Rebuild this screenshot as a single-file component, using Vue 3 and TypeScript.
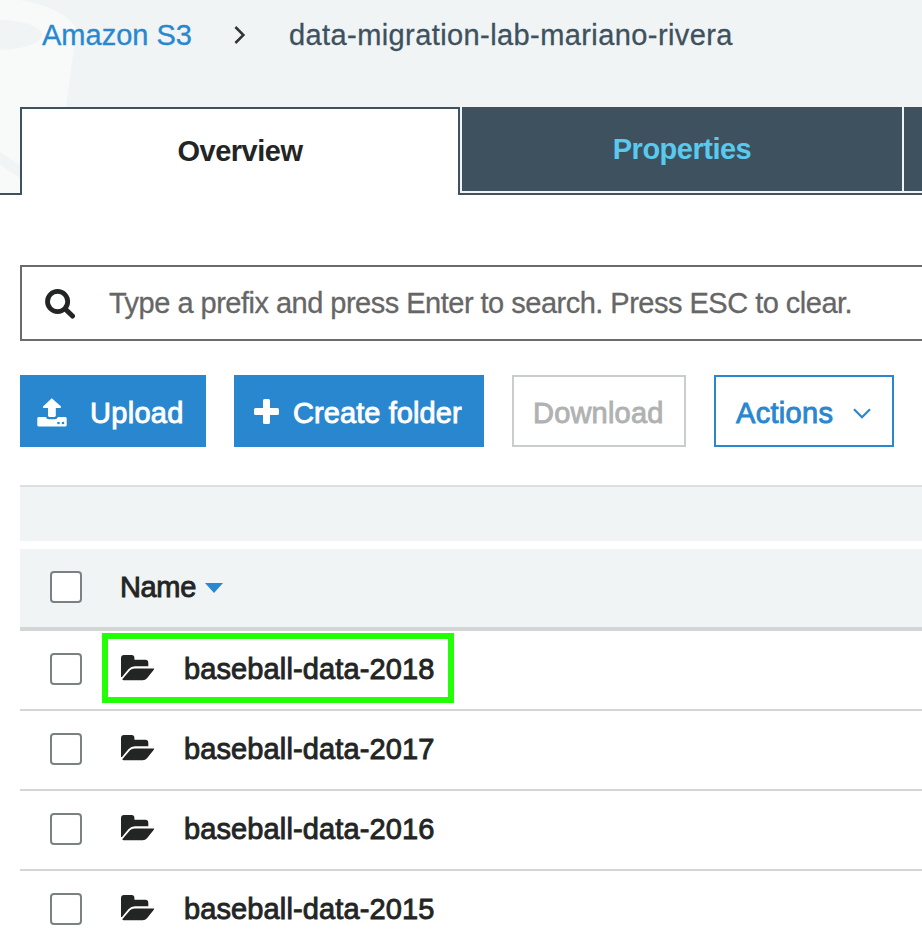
<script setup lang="ts">
interface FolderRow {
  name: string
  highlighted?: boolean
}

const searchHint = 'Type a prefix and press Enter to search. Press ESC to clear.'

const folders: FolderRow[] = [
  { name: 'baseball-data-2018', highlighted: true },
  { name: 'baseball-data-2017' },
  { name: 'baseball-data-2016' },
  { name: 'baseball-data-2015' },
]
</script>

<template>
  <div class="page">
    <header class="header">
      <svg class="bucket" viewBox="0 0 80 193" width="80" height="193" aria-hidden="true">
        <path d="M0 0H19C48 4 76 18 76 32L66 107L54 193H0Z" fill="#f8faf9" />
        <path d="M0 20C24 20 42 27 42 35S24 49 0 50Z" fill="#f0f4f5" />
        <path d="M0 152L20 165V178L0 165Z" fill="#f0f4f5" />
      </svg>
      <nav class="breadcrumb">
        <a class="crumb-link">Amazon S3</a>
        <svg class="crumb-arrow" viewBox="0 0 12 20" width="12" height="20">
          <path d="M1.4 2L9.4 10L1.4 18" fill="none" stroke="#333" stroke-width="2.5" />
        </svg>
        <span class="crumb-current">data-migration-lab-mariano-rivera</span>
      </nav>
      <div class="tabs">
        <div class="tab tab-active">Overview</div>
        <div class="tab tab-idle">Properties</div>
        <div class="tab tab-idle"></div>
      </div>
    </header>

    <main class="content">
      <div class="search">
        <svg class="search-icon" viewBox="0 0 30 30" width="30" height="30">
          <circle cx="12.6" cy="12.5" r="10.1" fill="none" stroke="#232525" stroke-width="4.8" />
          <path d="M20.5 20.2L27.5 27" stroke="#232525" stroke-width="5" stroke-linecap="round" />
        </svg>
        <span class="search-text">{{ searchHint }}</span>
      </div>

      <div class="toolbar">
        <button class="btn btn-primary btn-upload">
          <svg viewBox="0 0 30 29" width="30" height="29">
            <path
              d="M14.8.3L24 8.6Q24.4 10 23 10H18.8V17.6Q18.8 19 17.4 19H12.4Q11 19 11 17.6V10H6.8Q5.4 10 6 8.6Z"
              fill="#fff"
            />
            <path
              d="M1.6 19H9V19.3Q9.6 21.2 11.8 21.2H18Q20.2 21.2 20.8 19.3V19H28.3Q29.7 19 29.7 20.5V27Q29.7 28.5 28.2 28.5H1.8Q.3 28.5 .3 27V20.5Q.3 19 1.6 19Z"
              fill="#fff"
            />
            <circle cx="21.5" cy="25" r="1.3" fill="#2987cf" />
            <circle cx="26" cy="25" r="1.3" fill="#2987cf" />
          </svg>
          <span class="upload-label">Upload</span>
        </button>
        <button class="btn btn-primary btn-create">
          <svg viewBox="0 0 25 25" width="25" height="25">
            <rect x="9" y="0" width="7" height="25" rx="1.6" fill="#fff" />
            <rect x="0" y="9" width="25" height="7" rx="1.6" fill="#fff" />
          </svg>
          <span class="create-label">Create folder</span>
        </button>
        <button class="btn btn-disabled"><span class="download-label">Download</span></button>
        <button class="btn btn-outline">
          <span class="actions-label">Actions</span>
          <svg class="caret" viewBox="0 0 18 11" width="18" height="11">
            <path d="M1 1.2L9 9.2L17 1.2" fill="none" stroke="#2987cf" stroke-width="2.2" />
          </svg>
        </button>
      </div>

      <div class="table">
        <div class="table-strip"></div>
        <div class="table-head">
          <span class="checkbox"></span>
          <span class="head-name">Name</span>
          <svg class="sort" viewBox="0 0 18 10" width="18" height="10">
            <path d="M0 0H18L9 10Z" fill="#2987cf" />
          </svg>
        </div>
        <div v-for="folder in folders" :key="folder.name" class="row">
          <span v-if="folder.highlighted" class="highlight"></span>
          <span class="checkbox"></span>
          <svg class="folder" viewBox="0 0 34 26" width="34" height="26">
            <path
              d="M0 22V3Q0 0 3 0H10.6Q13.4 0 13.4 3V4.7H24.3Q27.3 4.7 27.3 7.7V11.3H14Q10.2 11.3 7.6 14L1 22Z"
              fill="#232525"
            />
            <path
              d="M1.5 24L9 15.3Q10.8 13.4 13.4 13.4H32.5Q33.7 13.5 33 14.6L26 23.2Q24.3 25.3 21.8 25.3H3Q.8 25.2 1.5 24Z"
              fill="#232525"
            />
          </svg>
          <span class="folder-name">{{ folder.name }}</span>
        </div>
      </div>
    </main>
  </div>
</template>

<style>
body {
  margin: 0;
  background: #fff;
}
</style>

<style scoped>
.page {
  box-sizing: border-box;
  height: 940px;
  overflow: hidden;
  background: #fff;
  color: #232525;
  font-family: 'Liberation Sans', Arial, Helvetica, sans-serif;
  font-size: 29px;
  line-height: 32px;
}

.header {
  position: relative;
  box-sizing: border-box;
  height: 195px;
  background: #f0f4f5;
  border-bottom: 2px solid #3d515e;
}

.bucket {
  position: absolute;
  left: 0;
  top: 0;
}

.breadcrumb {
  position: relative;
  display: flex;
  align-items: center;
  height: 70px;
  padding: 0 0 37px 42px;
  white-space: nowrap;
  -webkit-text-stroke: 0.3px currentColor;
}

.crumb-link {
  width: 192px;
  color: #2987cf;
}

.crumb-arrow {
  margin: -1px 43px 0 0;
}

.crumb-current {
  color: #3d515e;
  letter-spacing: 0.41px;
}

.tabs {
  position: relative;
  display: flex;
  gap: 2px;
  padding-left: 20px;
}

.tab {
  flex: none;
  box-sizing: border-box;
  width: 440px;
  text-align: center;
  font-weight: 700;
  letter-spacing: -0.5px;
}

.tab-active {
  height: 88px;
  margin-bottom: -2px;
  padding-top: 26px;
  background: #fff;
  border: 2px solid #3d515e;
  border-bottom: 0;
  border-radius: 0 0 2px 2px;
}

.tab-idle {
  height: 84px;
  padding-top: 26px;
  background: #3d515e;
  color: #5bc9ee;
}

.content {
  width: 1100px;
  padding: 70px 0 0 20px;
}

.search {
  box-sizing: border-box;
  display: flex;
  align-items: center;
  gap: 34px;
  height: 76px;
  padding-left: 23px;
  border: 2px solid #6a6b6b;
  color: #666;
}

.search-icon {
  margin-top: 2px;
}

.search-text {
  letter-spacing: -0.51px;
  white-space: nowrap;
  -webkit-text-stroke: 0.3px currentColor;
}

.toolbar {
  display: flex;
  gap: 28px;
  margin-top: 34px;
}

.btn {
  box-sizing: border-box;
  display: flex;
  align-items: center;
  height: 72px;
  margin: 0;
  padding: 0 0 0 19px;
  border: 2px solid #2987cf;
  border-radius: 0;
  background: #fff;
  color: #2987cf;
  font: inherit;
  letter-spacing: 0.3px;
  white-space: nowrap;
  -webkit-text-stroke: 0.9px currentColor;
}

.btn span {
  padding-top: 4px;
}

.btn svg {
  flex: none;
}

.btn-primary {
  background: #2987cf;
  color: #fff;
}

.btn-upload {
  width: 186px;
  padding-left: 15px;
  gap: 23px;
}

.btn-upload svg {
  margin-top: 2px;
}

.btn-create {
  width: 250px;
  padding-left: 18px;
  gap: 14px;
  letter-spacing: 0.08px;
}

.btn-disabled {
  width: 174px;
  border-color: #c9cecd;
  color: #b0b2b2;
  letter-spacing: 0.2px;
}

.btn-outline {
  width: 180px;
  padding-left: 20px;
  gap: 20px;
}

.caret {
  margin-top: 5px;
}

.table {
  margin-top: 38px;
}

.table-strip {
  height: 54px;
  border-top: 2px solid #dddfdf;
  background: #f0f4f5;
}

.table-head {
  display: flex;
  align-items: center;
  box-sizing: border-box;
  height: 82px;
  margin-top: 8px;
  padding: 0 0 2px 30px;
  border-bottom: 4px solid #d4d5d5;
  background: #f0f4f5;
}

.checkbox {
  flex: none;
  box-sizing: border-box;
  width: 32px;
  height: 32px;
  border: 2px solid #7b8183;
  border-radius: 4px;
  background: #fff;
}

.head-name {
  width: 76px;
  margin-left: 38px;
  letter-spacing: -0.35px;
  -webkit-text-stroke: 0.9px currentColor;
}

.sort {
  margin: 2px 0 0 9px;
}

.row {
  position: relative;
  display: flex;
  align-items: center;
  box-sizing: border-box;
  height: 80px;
  padding: 0 0 2px 30px;
  border-bottom: 2px solid #d4d5d5;
}

.folder {
  margin: -2px 29px 0 39px;
}

.folder-name {
  letter-spacing: 0.12px;
  -webkit-text-stroke: 0.9px currentColor;
}

.highlight {
  position: absolute;
  left: 82px;
  top: 2px;
  box-sizing: border-box;
  width: 352px;
  height: 70px;
  border: 6px solid #22ff06;
}
</style>
